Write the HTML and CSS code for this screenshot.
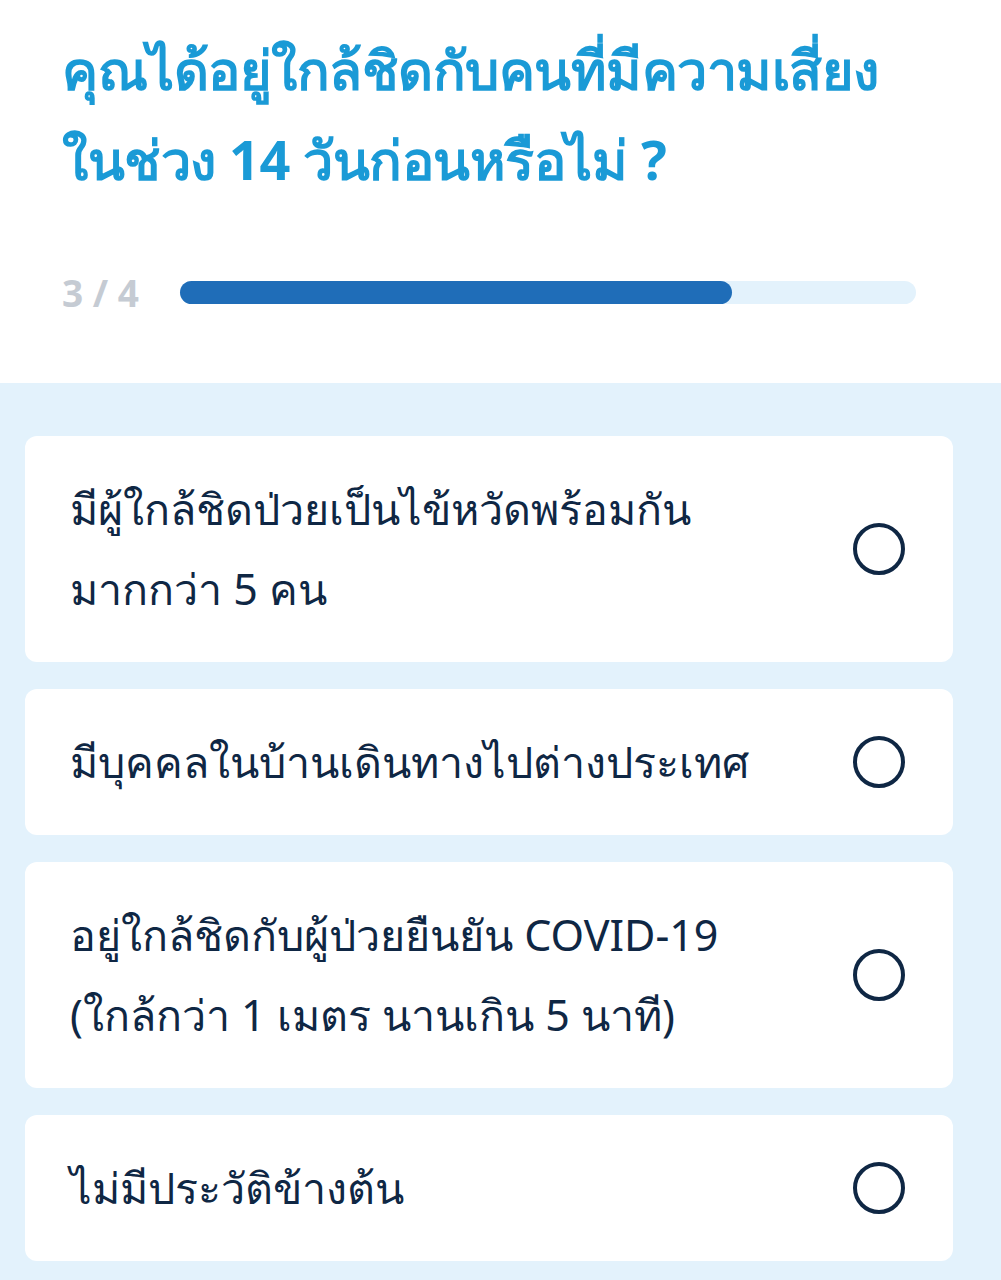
FILE: index.html
```html
<!DOCTYPE html>
<html lang="th">
<head>
  <meta charset="UTF-8" />
  <title>แบบประเมินความเสี่ยง</title>
  <link rel="stylesheet" href="styles.css">
</head>
<body>

  <div class="header">
    <h1 class="question">คุณได้อยู่ใกล้ชิดกับคนที่มีความเสี่ยง<br>ในช่วง 14 วันก่อนหรือไม่ ?</h1>
    <div class="progress">
      <span class="step">3 / 4</span>
      <div class="track">
        <div class="fill" style="width: 75%;"></div>
      </div>
    </div>
  </div>

  <div class="choices">
    <label class="choice">
      <span class="choice-text">มีผู้ใกล้ชิดป่วยเป็นไข้หวัดพร้อมกัน<br>มากกว่า 5 คน</span>
      <span class="radio"></span>
    </label>
    <label class="choice">
      <span class="choice-text">มีบุคคลในบ้านเดินทางไปต่างประเทศ</span>
      <span class="radio"></span>
    </label>
    <label class="choice">
      <span class="choice-text">อยู่ใกล้ชิดกับผู้ป่วยยืนยัน COVID-19<br>(ใกล้กว่า 1 เมตร นานเกิน 5 นาที)</span>
      <span class="radio"></span>
    </label>
    <label class="choice">
      <span class="choice-text">ไม่มีประวัติข้างต้น</span>
      <span class="radio"></span>
    </label>
  </div>

</body>
</html>
```

FILE: styles.css
```css
body {
  margin: 0;
  font-family: "Noto Sans", "DejaVu Sans", sans-serif;
  background: #e3f2fc;
  min-height: 100vh;
}
.header {
  background: white;
  padding: 24px 62px 0 62px;
  height: 383px;
  box-sizing: border-box;
}
.question {
  margin: 0;
  color: #1a9ad6;
  font-size: 54px;
  font-weight: bold;
  line-height: 90px;
  letter-spacing: -0.5px;
}
.progress {
  display: flex;
  align-items: center;
  margin-top: 63px;
}
.step {
  width: 118px;
  color: #c5cbd3;
  font-size: 37px;
  font-weight: bold;
}
.track {
  flex: 1;
  margin-right: 23px;
  height: 23px;
  background: #e3f2fc;
  border-radius: 12px;
}
.fill {
  height: 100%;
  background: #1f6db8;
  border-radius: 12px;
}
.choices {
  padding: 53px 48px 20px 25px;
  display: flex;
  flex-direction: column;
  gap: 27px;
}
.choice {
  background: white;
  border-radius: 12px;
  padding: 33px 48px 33px 45px;
  display: flex;
  align-items: center;
  justify-content: space-between;
}
.choice-text {
  color: #0f2744;
  font-size: 43px;
  line-height: 80px;
}
.radio {
  width: 44px;
  height: 44px;
  border: 4px solid #0f2744;
  border-radius: 50%;
  flex-shrink: 0;
}
```
